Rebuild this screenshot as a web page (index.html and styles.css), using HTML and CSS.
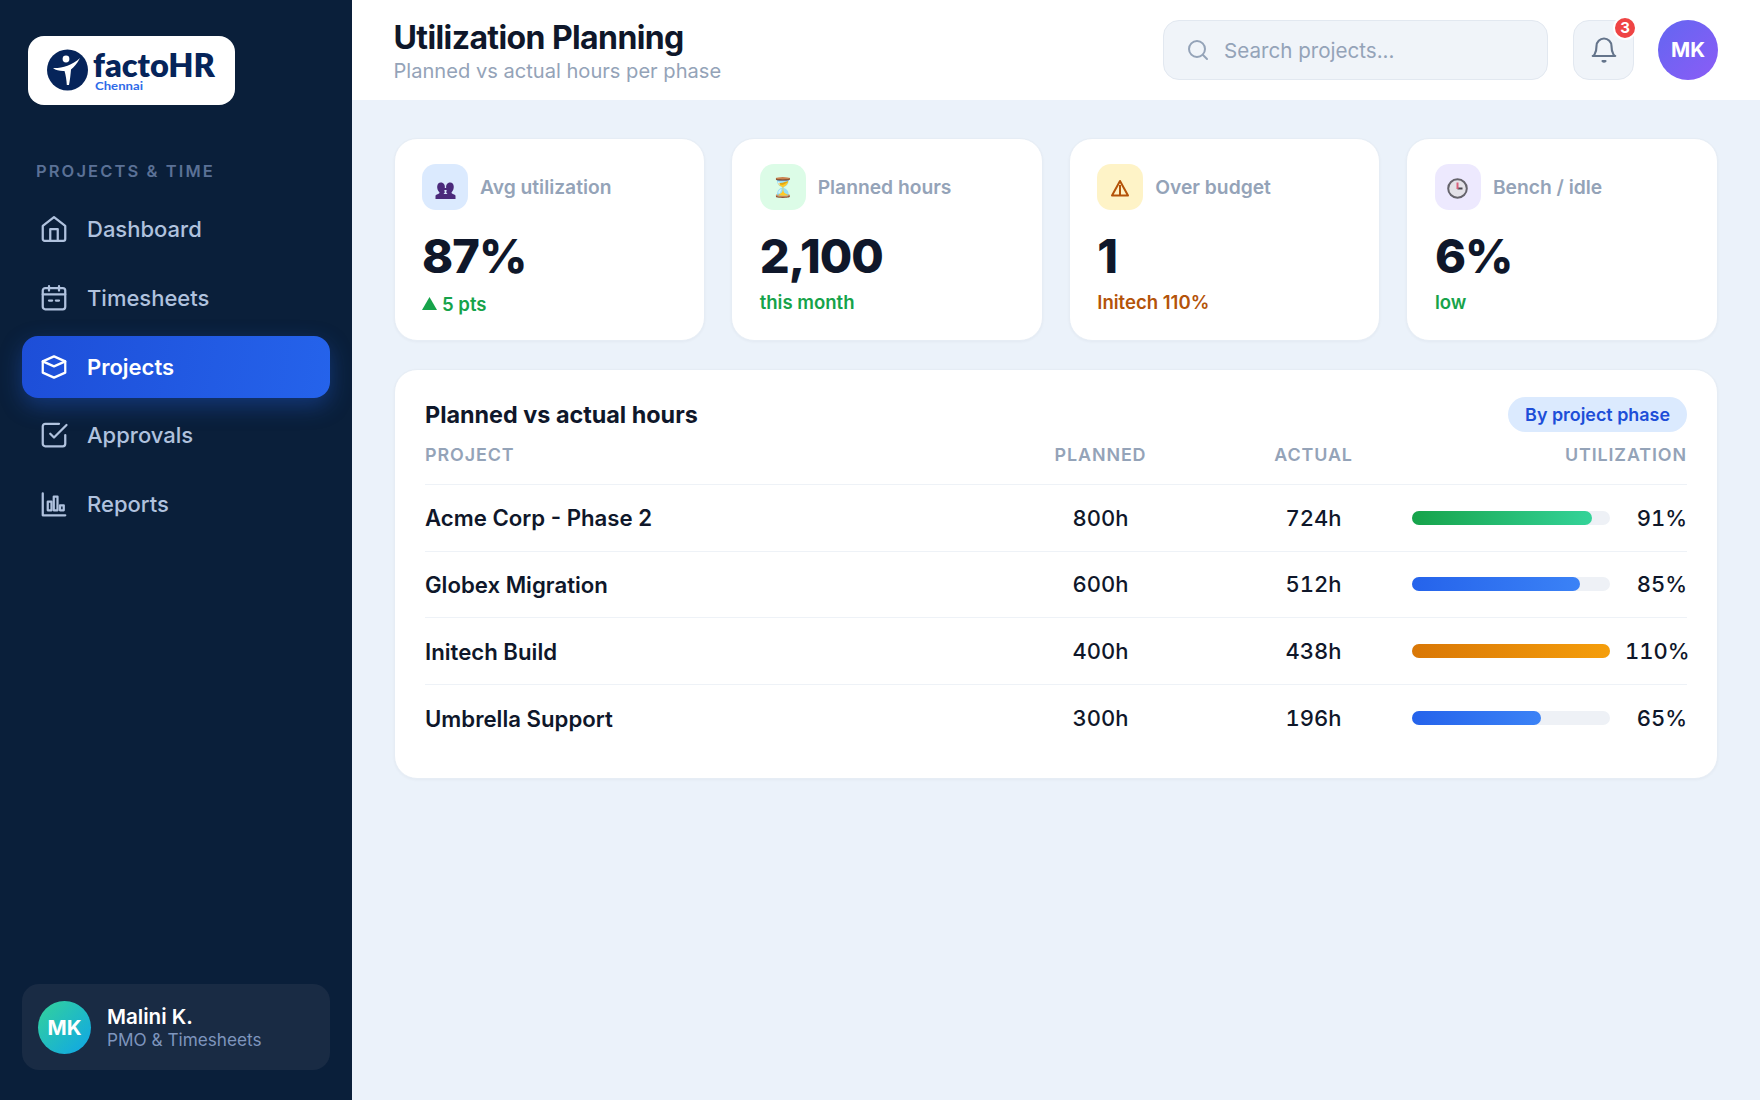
FILE: index.html
```html
<!DOCTYPE html>
<html lang="en">
<head>
<meta charset="utf-8">
<title>Utilization Planning</title>
<link rel="stylesheet" href="styles.css">
</head>
<body>

<div class="app">

<aside class="sidebar">
	<div class="logo">
		<svg width="176" height="46" viewBox="0 0 176 46">
			<circle cx="20.5" cy="23" r="20.5" fill="#06245a"/>
			<circle cx="19" cy="12" r="3.4" fill="#fff"/>
			<path d="M6 21C14 21.500 25 18.500 33 11C30 17 27 20 24 22.500C23.500 28 23 33 22 38H19.800C19.500 33 18.800 28 17.500 24C13 24.200 9 23.500 6 21Z" fill="#fff"/>
			<text class="logo-name" x="46" y="30" textLength="122" lengthAdjust="spacingAndGlyphs">factoHR</text>
			<text class="logo-city" x="48" y="43" textLength="48" lengthAdjust="spacingAndGlyphs">Chennai</text>
		</svg>
	</div>

	<div class="section">PROJECTS &amp; TIME</div>

	<nav class="nav">
		<a class="item">
			<svg class="icon" viewBox="0 0 24 24"><path d="M3 9.500 12 2.500l9 7V20a1.500 1.500 0 0 1-1.500 1.500h-15A1.500 1.500 0 0 1 3 20z"/><path d="M9 21.500V12h6v9.500"/></svg>
			<span>Dashboard</span>
		</a>
		<a class="item">
			<svg class="icon" viewBox="0 0 24 24"><rect x="3" y="4" width="18" height="17" rx="2"/><path d="M3 9h18M8 2.500V6M16 2.500V6M8 14h2.500M13.500 14H16"/></svg>
			<span>Timesheets</span>
		</a>
		<a class="item active">
			<svg class="icon" viewBox="0 0 24 24"><path d="M12 3.500l9 4v9L12 20.500l-9-4v-9z"/><path d="M3 7.500l9 4 9-4"/></svg>
			<span>Projects</span>
		</a>
		<a class="item">
			<svg class="icon" viewBox="0 0 24 24"><path d="M9 11l3 3L22 4"/><path d="M21 12v7a2 2 0 0 1-2 2H5a2 2 0 0 1-2-2V5a2 2 0 0 1 2-2h11"/></svg>
			<span>Approvals</span>
		</a>
		<a class="item">
			<svg class="icon" viewBox="0 0 24 24"><path d="M3 3.500V21h18"/><rect x="7" y="10" width="3" height="7"/><rect x="11.800" y="6" width="3" height="11"/><rect x="16.800" y="13" width="3" height="4"/></svg>
			<span>Reports</span>
		</a>
	</nav>

	<div class="user">
		<div class="user-pic">MK</div>
		<div>
			<div class="user-name">Malini K.</div>
			<div class="user-role">PMO &amp; Timesheets</div>
		</div>
	</div>
</aside>

<div class="main">
	<header class="header">
		<div class="heading">
			<h1>Utilization Planning</h1>
			<p>Planned vs actual hours per phase</p>
		</div>
		<div class="search">
			<svg viewBox="0 0 24 24"><circle cx="11" cy="11" r="8"/><path d="M21 21l-4-4"/></svg>
			<span>Search projects...</span>
		</div>
		<div class="bell">
			<svg viewBox="0 0 24 24"><path d="M6 8a6 6 0 0 1 12 0c0 7 3 8 3 8H3s3-1 3-8z"/><path d="M10.800 20a1.600 1.600 0 0 0 2.400 0z"/></svg>
			<span class="count">3</span>
		</div>
		<div class="avatar">MK</div>
	</header>

	<div class="content">
		<div class="cards">
			<div class="card">
				<div class="card-head">
					<span class="chip blue">
						<svg class="people" viewBox="0 0 21 17"><path d="M0.500 17v-3c0-2 4-1.500 4-3.500C1 7 1.500 0.500 5.800 0.500c3 0 4.500 2.500 4 5.500h1.400c-0.500-3 1-5.500 4-5.500 4.300 0 4.800 6.500 1.300 10 0 2 4 1.500 4 3.500v3z"/><path class="gap" d="M9.300 8h2.400l-0.500 2.500 1.300 1.500h-4l1.300-1.500z"/></svg>
					</span>Avg utilization
				</div>
				<div class="value">87%</div>
				<div class="note up"><svg class="tri" viewBox="0 0 15 13"><path d="M7.500 0L15 13H0z"/></svg>5 pts</div>
			</div>
			<div class="card">
				<div class="card-head"><span class="chip green">⏳</span>Planned hours</div>
				<div class="value">2,100</div>
				<div class="note">this month</div>
			</div>
			<div class="card">
				<div class="card-head"><span class="chip yellow"><svg class="alert" viewBox="0 0 20 18"><path d="M10 2L18 16.500H2zM10 6v10"/></svg></span>Over budget</div>
				<div class="value">1</div>
				<div class="note warn">Initech 110%</div>
			</div>
			<div class="card">
				<div class="card-head">
					<span class="chip purple">
						<svg class="clock" viewBox="0 0 21 21"><circle cx="10.500" cy="10.500" r="9.300"/><path class="hour" d="M10.500 10.500h5"/><path class="minute" d="M10.500 11V4.500"/></svg>
					</span>Bench / idle
				</div>
				<div class="value">6%</div>
				<div class="note">low</div>
			</div>
		</div>

		<div class="panel">
			<div class="panel-head">
				<h2>Planned vs actual hours</h2>
				<span class="pill">By project phase</span>
			</div>
			<div class="row head">
				<span>PROJECT</span><span class="num">PLANNED</span><span class="num">ACTUAL</span><span class="last">UTILIZATION</span>
			</div>
			<div class="row">
				<span class="name">Acme Corp - Phase 2</span><span class="num">800h</span><span class="num">724h</span>
				<div class="util"><div class="bar"><div class="fill good" style="width:91%"></div></div><span class="pct">91%</span></div>
			</div>
			<div class="row">
				<span class="name">Globex Migration</span><span class="num">600h</span><span class="num">512h</span>
				<div class="util"><div class="bar"><div class="fill" style="width:85%"></div></div><span class="pct">85%</span></div>
			</div>
			<div class="row">
				<span class="name">Initech Build</span><span class="num">400h</span><span class="num">438h</span>
				<div class="util"><div class="bar"><div class="fill over" style="width:100%"></div></div><span class="pct">110%</span></div>
			</div>
			<div class="row">
				<span class="name">Umbrella Support</span><span class="num">300h</span><span class="num">196h</span>
				<div class="util"><div class="bar"><div class="fill" style="width:65%"></div></div><span class="pct">65%</span></div>
			</div>
		</div>
	</div>
</div>

</div>

</body>
</html>
```
FILE: styles.css
```css
* {
	box-sizing: border-box;
}

body {
	margin: 0;
	font-family: Inter, "Liberation Sans", sans-serif;
	color: #0f172a;
	background: #ebf2fa;
}

h1, h2, p {
	margin: 0;
}

svg {
	display: block;
}

.app {
	display: flex;
	height: 1100px;
	overflow: hidden;
}

/* sidebar */

.sidebar {
	width: 352px;
	flex: none;
	display: flex;
	flex-direction: column;
	padding: 35.500px 22px 30px;
	background: #0a1f3a;
}

.logo {
	width: 207px;
	height: 69px;
	margin-left: 5.500px;
	padding: 11.500px 19.500px;
	border-radius: 16px;
	background: #fff;
}

.logo-name {
	font: 800 32px Lato, sans-serif;
	fill: #06245a;
}

.logo-city {
	font: 700 12px Lato, sans-serif;
	fill: #2f6be8;
}

.section {
	margin: 55px 14px 16.500px;
	height: 22px;
	line-height: 22px;
	font-size: 16.500px;
	font-weight: 600;
	letter-spacing: 2.100px;
	color: #5b7196;
}

.nav {
	display: flex;
	flex-direction: column;
	gap: 6.750px;
}

.item {
	display: flex;
	align-items: center;
	gap: 18px;
	height: 62px;
	padding: 0 17px;
	border-radius: 16px;
	font-size: 22px;
	font-weight: 500;
	color: #b0c2de;
}

.icon {
	width: 30px;
	height: 30px;
	fill: none;
	stroke: currentColor;
	stroke-width: 1.800;
	stroke-linecap: round;
	stroke-linejoin: round;
}

.active {
	font-weight: 600;
	color: #fff;
	background: linear-gradient(100deg, #1d4ed8, #2563eb);
	box-shadow: 0 8px 22px rgba(37, 99, 235, 0.35);
}

.user {
	display: flex;
	align-items: center;
	gap: 16px;
	height: 86px;
	margin-top: auto;
	padding: 0 16px;
	border-radius: 17px;
	background: #192b44;
}

.user-pic {
	width: 53px;
	height: 53px;
	border-radius: 50%;
	line-height: 53px;
	text-align: center;
	font-size: 20.600px;
	font-weight: 700;
	color: #fff;
	background: linear-gradient(135deg, #34d399, #0ea5e9);
}

.user-name {
	line-height: 25px;
	font-size: 20.600px;
	font-weight: 600;
	color: #fff;
}

.user-role {
	line-height: 21px;
	font-size: 17.200px;
	color: #7e95bd;
}

/* top bar */

.main {
	flex: 1;
}

.header {
	display: flex;
	align-items: center;
	height: 100px;
	padding: 0 42px 0 41.500px;
	background: #fff;
}

.heading {
	flex: 1;
	padding-top: 4.500px;
}

.heading h1 {
	line-height: 38px;
	font-size: 32px;
	font-weight: 700;
	letter-spacing: -0.600px;
}

.heading p {
	line-height: 28px;
	font-size: 20.100px;
	color: #94a3b8;
}

.search {
	display: flex;
	align-items: center;
	gap: 14px;
	width: 385px;
	height: 60px;
	padding: 0 22px;
	border: 1px solid #e2e8f0;
	border-radius: 16px;
	font-size: 20.600px;
	color: #94a3b8;
	background: #f0f4f9;
}

.search svg {
	width: 24px;
	height: 24px;
	fill: none;
	stroke: #94a3b8;
	stroke-width: 2;
	stroke-linecap: round;
}

.bell {
	position: relative;
	display: flex;
	align-items: center;
	justify-content: center;
	width: 61px;
	height: 60px;
	margin: 0 24px 0 25px;
	border: 1px solid #e2e8f0;
	border-radius: 16px;
	background: #f0f4f9;
}

.bell svg {
	width: 30px;
	height: 30px;
	margin-top: 2px;
	fill: none;
	stroke: #64748b;
	stroke-width: 1.700;
	stroke-linejoin: round;
}

.count {
	position: absolute;
	top: -5px;
	right: -4px;
	width: 24px;
	height: 24px;
	border: 2px solid #fff;
	border-radius: 50%;
	line-height: 20px;
	text-align: center;
	font-size: 15px;
	font-weight: 700;
	color: #fff;
	background: #ef4444;
}

.avatar {
	width: 60px;
	height: 60px;
	border-radius: 50%;
	line-height: 60px;
	text-align: center;
	font-size: 20.600px;
	font-weight: 700;
	color: #fff;
	background: linear-gradient(135deg, #6366f1, #8b5cf6);
}

/* stat cards */

.content {
	padding: 38px 42px 0 41.500px;
}

.cards {
	display: grid;
	grid-template-columns: repeat(4, 1fr);
	gap: 26px;
}

.card, .panel {
	border: 1px solid #e6edf5;
	border-radius: 23px;
	background: #fff;
	box-shadow: 0 1px 3px rgba(15, 23, 42, 0.04);
}

.card {
	height: 203px;
	padding: 25px 27.500px;
}

.card-head {
	display: flex;
	align-items: center;
	gap: 12px;
	font-size: 19.250px;
	font-weight: 600;
	color: #94a3b8;
}

.chip {
	display: flex;
	align-items: center;
	justify-content: center;
	width: 46px;
	height: 46px;
	border-radius: 14px;
	font-size: 19px;
}

.chip svg {
	fill: none;
	stroke-linejoin: round;
}

.chip .people {
	width: 21px;
	height: 17px;
	margin-top: 7px;
	fill: #4b2a7b;
}

.people .gap {
	fill: #dbeafe;
}

.alert {
	width: 20px;
	height: 18px;
	margin-top: 2px;
	stroke: #b45309;
	stroke-width: 2;
}

.chip .clock {
	width: 21px;
	height: 21px;
	margin-top: 2px;
	fill: #e4e2e8;
	stroke: #66646c;
	stroke-width: 2;
}

.clock .hour {
	stroke: #4a4850;
}

.clock .minute {
	stroke: #d9607a;
}

.blue { background: #dbeafe; }
.green { background: #dcfce7; }
.yellow { background: #fef3c7; }
.purple { background: #ede9fe; }

.value {
	margin-top: 16.500px;
	line-height: 57px;
	font-size: 47px;
	font-weight: 800;
	letter-spacing: -0.940px;
}

.note {
	display: flex;
	align-items: center;
	gap: 5px;
	margin-top: 6px;
	line-height: 24px;
	font-size: 18.560px;
	font-weight: 600;
	color: #16a34a;
}

.up {
	margin-top: 8px;
}

.tri {
	width: 15px;
	height: 13px;
	fill: #16a34a;
}

.warn {
	color: #b45309;
}

/* table */

.panel {
	height: 410px;
	margin-top: 28px;
	padding: 27px 30px 0 30.500px;
}

.panel-head {
	display: flex;
	align-items: center;
	justify-content: space-between;
}

.panel-head h2 {
	font-size: 23.375px;
	font-weight: 700;
}

.pill {
	height: 35px;
	padding: 0 17px;
	border-radius: 18px;
	line-height: 35px;
	font-size: 17.900px;
	font-weight: 600;
	color: #1d4ed8;
	background: #dbeafe;
}

.row {
	display: grid;
	grid-template-columns: 1fr 213px 213px 267px;
	align-items: center;
	height: 66.660px;
	border-bottom: 1px solid #eef2f7;
	font-size: 22px;
	font-weight: 500;
}

.row:last-child {
	border-bottom: 0;
}

.head {
	height: 53px;
	padding-bottom: 8px;
	font-size: 17.900px;
	font-weight: 600;
	letter-spacing: 0.900px;
	color: #94a3b8;
}

.name {
	font-weight: 600;
	font-size: 22.200px;
}

.num {
	text-align: center;
	font-variant-numeric: tabular-nums;
}

.last {
	text-align: right;
}

.util {
	display: flex;
	align-items: center;
	justify-content: flex-end;
	gap: 15px;
}

.bar {
	flex: none;
	width: 198px;
	height: 14px;
	border-radius: 7px;
	background: #eef1f6;
}

.fill {
	height: 14px;
	border-radius: 7px;
	background: linear-gradient(90deg, #2563eb, #3b82f6);
}

.good { background: linear-gradient(90deg, #16a34a, #34d399); }
.over { background: linear-gradient(90deg, #d97706, #f59e0b); }

.pct {
	flex: none;
	width: 62px;
	text-align: right;
	font-variant-numeric: tabular-nums;
}
```
